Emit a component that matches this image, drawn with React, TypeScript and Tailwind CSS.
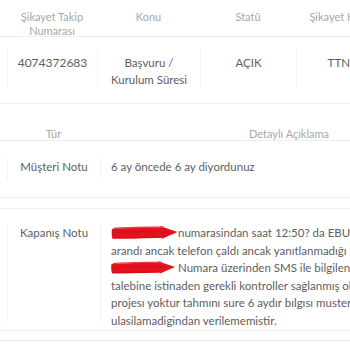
import React from 'react';

const Redacted = ({ width }: { width: number }) => (
  <svg width={width} height={13} viewBox="0 0 66 13" className="inline-block align-[-2px]">
    <path
      d="M0.5 3 C 14 1.5, 32 2, 49 1.5 L 48.5 0 L 66 6 L 50 13 L 50.5 11.5 C 34 12, 16 12.5, 1 12.5 C 0 9, 0 6, 0.5 3 Z"
      fill="#e5111c"
    />
    <path d="M2 2.5 C 20 1, 38 1.5, 52 1" stroke="#f23a42" strokeWidth="1.4" fill="none" />
    <path d="M3 6.5 C 20 5.5, 38 6, 58 6" stroke="#c90a14" strokeWidth="1" fill="none" opacity="0.6" />
    <path d="M1 11.8 C 18 12, 36 11.5, 50 11.2" stroke="#d40f19" strokeWidth="1.2" fill="none" />
  </svg>
);

const closingLines: React.ReactNode[] = [
  <>
    <Redacted width={67} />
    numarasindan saat 12:50? da EBULENT
  </>,
  'arandı ancak telefon çaldı ancak yanıtlanmadığı için',
  <>
    <Redacted width={64} />
    {' '}Numara üzerinden SMS ile bilgilendirildi
  </>,
  'talebine istinaden gerekli kontroller sağlanmış olup',
  'projesı yoktur tahmını sure 6 aydır bılgısı musterıye',
  'ulasilamadigindan verilememistir.',
];

export default function App() {
  return (
    <div className="w-[350px] h-[350px] overflow-hidden bg-white font-['Lato',sans-serif] text-[11.5px]">
      {/* complaint table */}
      <div className="flex h-[37px] border-b border-[#eeeeee] pl-[7px] text-[11px] text-[#a8a8a8] leading-[14px] whitespace-nowrap">
        <div className="w-[90px] shrink-0 pt-[10px] text-center">
          Şikayet Takip
          <br />
          Numarası
        </div>
        <div className="w-[103px] shrink-0 pt-[10px] text-center">Konu</div>
        <div className="w-[96px] shrink-0 pt-[10px] text-center">Statü</div>
        <div className="w-[94px] shrink-0 pt-[10px] text-center">Şikayet Kanalı</div>
      </div>
      <div className="flex pl-[7px] pt-[11px] pb-[15px] border-b border-[#eeeeee] text-[#5e5e5e] leading-[17px] whitespace-nowrap">
        <div className="w-[90px] shrink-0 h-[40px] pt-[6px] border-l border-[#f2f2f2] text-center text-[12px]">4074372683</div>
        <div className="w-[103px] shrink-0 h-[40px] pt-[6px] border-l border-[#f2f2f2] text-center">
          Başvuru /
          <br />
          Kurulum Süresi
        </div>
        <div className="w-[96px] shrink-0 h-[40px] pt-[6px] border-l border-[#f2f2f2] text-center">AÇIK</div>
        <div className="w-[98px] shrink-0 h-[40px] pt-[6px] border-l border-[#f2f2f2] text-center">TTNET</div>
      </div>

      {/* notes table */}
      <div className="flex h-[37px] border-b border-[#eeeeee] pl-[7px] text-[11px] text-[#a8a8a8] leading-[14px] whitespace-nowrap">
        <div className="w-[93px] shrink-0 pt-[23px] text-center">Tür</div>
        <div className="w-[378px] shrink-0 pt-[23px] text-center">Detaylı Açıklama</div>
      </div>
      <div className="flex pl-[7px] pt-[18px] pb-[18px] border-b border-[#eeeeee] text-[#5e5e5e] leading-[16px] whitespace-nowrap">
        <div className="w-[93px] shrink-0 h-[20px] border-l border-[#f2f2f2] text-center">Müşteri Notu</div>
        <div className="w-[378px] shrink-0 h-[20px] border-l border-[#f2f2f2] pl-[10px]">6 ay öncede 6 ay diyordunuz</div>
      </div>
      <div className="mt-[10px] flex pl-[7px] pt-[15px] pb-[9px] border-y border-[#eeeeee] text-[#5e5e5e] leading-[17.5px] whitespace-nowrap">
        <div className="w-[93px] shrink-0 h-[97px] border-l border-[#f2f2f2] text-center">Kapanış Notu</div>
        <div className="w-[378px] shrink-0 h-[97px] border-l border-[#f2f2f2] pl-[10px]">
          {closingLines.map((line, i) => (
            <div key={i}>{line}</div>
          ))}
        </div>
      </div>
      <div className="mt-[9px] border-t border-[#eeeeee]" />
    </div>
  );
}
